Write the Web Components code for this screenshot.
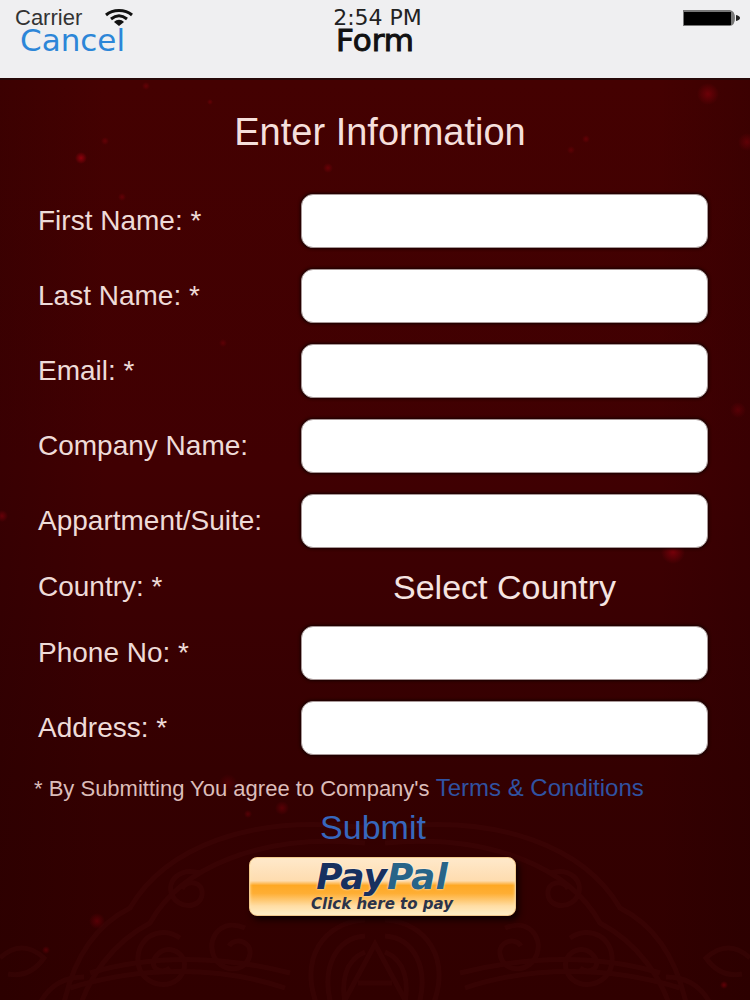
<!DOCTYPE html>
<html lang="en">
<head>
<meta charset="utf-8">
<meta name="viewport" content="width=device-width, initial-scale=1">
<title>Form</title>
<style>
  body {
    margin: 0;
    font-family: "Liberation Sans", Arial, sans-serif;
    background: #330000;
  }
</style>
</head>
<body>
<form-screen></form-screen>

<script>
class StatusBar extends HTMLElement {
    constructor() {
        super();
        this.attachShadow({ mode: 'open' });
    }

    connectedCallback() {
        this.shadowRoot.innerHTML = `
      <style>
        :host {
          display: grid;
          grid-template-columns: 1fr auto 1fr;
          align-items: center;
          height: 24px;
          padding: 6px 10px 0 15px;
          font-size: 22px;
          line-height: 22px;
          color: #333;
        }
        .carrier {
          display: flex;
          align-items: center;
          gap: 22px;
        }
        .time {
          color: #222;
          font-family: "DejaVu Sans", sans-serif;
        }
        .battery {
          justify-self: end;
        }
        svg {
          display: block;
        }
      </style>
      <div class="carrier">
        <span>${this.getAttribute('carrier')}</span>
        <svg width="30" height="18" viewBox="0 0 30 18" aria-hidden="true">
          <path d="M2 6C9 0 21 0 28 6" fill="none" stroke="#111" stroke-width="3"/>
          <path d="M7 10C12 6 18 6 23 10" fill="none" stroke="#111" stroke-width="3"/>
          <path d="M10 13C13 10 17 10 20 13L15 17Z" fill="#111"/>
        </svg>
      </div>
      <span class="time">${this.getAttribute('time')}</span>
      <svg class="battery" width="58" height="18" viewBox="0 0 58 18" aria-hidden="true">
        <path d="M1 1H48Q53 2 53 9Q53 16 48 17H1Z" fill="#777"/>
        <rect x="2" y="3" width="47" height="13" fill="#000"/>
        <path d="M54 6Q58 7 58 9Q58 11 54 12Z" fill="#222"/>
      </svg>
    `;
    }
}
customElements.define('status-bar', StatusBar);

class NavBar extends HTMLElement {
    constructor() {
        super();
        this.attachShadow({ mode: 'open' });
    }

    connectedCallback() {
        this.shadowRoot.innerHTML = `
      <style>
        :host {
          display: grid;
          grid-template-columns: 1fr auto 1fr;
          align-items: start;
          height: 48px;
          padding: 0 20px;
          font-family: "DejaVu Sans", sans-serif;
          font-size: 31px;
          line-height: 20px;
        }
        button {
          justify-self: start;
          padding: 0;
          border: none;
          background: none;
          font: inherit;
          color: #2c86d8;
          cursor: pointer;
        }
        h1 {
          margin: 0;
          font: inherit;
          color: #111;
          -webkit-text-stroke: 1px #111;
        }
      </style>
      <button type="button">Cancel</button>
      <h1><slot></slot></h1>
    `;
    }
}
customElements.define('nav-bar', NavBar);

class FormField extends HTMLElement {
    constructor() {
        super();
        this.attachShadow({ mode: 'open' });
    }

    connectedCallback() {
        const label = this.getAttribute('label');
        const type = this.getAttribute('type') || 'text';
        const star = this.hasAttribute('required') ? ' *' : '';
        const control = type === 'select'
            ? '<select id="control"><option>Select Country</option></select>'
            : `<input id="control" type="${type}">`;
        this.shadowRoot.innerHTML = `
      <style>
        :host {
          display: grid;
          grid-template-columns: 263fr 407fr;
          align-items: center;
        }
        label {
          font-size: 28px;
          line-height: 28px;
          color: #eedbd8;
          white-space: nowrap;
        }
        input, select {
          box-sizing: border-box;
          width: 100%;
          min-width: 0;
          font: inherit;
        }
        input {
          height: 54px;
          padding: 0 12px;
          border: 1px solid #a89898;
          border-radius: 12px;
          background: #fff;
          font-size: 24px;
          box-shadow: 0 0 3px 1px #180000;
        }
        select {
          height: 44px;
          margin: -4px 0;
          padding: 0;
          border: none;
          appearance: none;
          background: none;
          color: #f5e4e1;
          font-size: 34px;
          text-align: center;
          text-align-last: center;
        }
      </style>
      <label for="control">${label}${star}</label>
      ${control}
    `;
    }
}
customElements.define('form-field', FormField);

class PaypalButton extends HTMLElement {
    constructor() {
        super();
        this.attachShadow({ mode: 'open' });
    }

    connectedCallback() {
        this.shadowRoot.innerHTML = `
      <style>
        :host {
          display: block;
        }
        button {
          display: flex;
          flex-direction: column;
          align-items: center;
          box-sizing: border-box;
          width: 267px;
          height: 59px;
          padding: 3px 0 0;
          border: 1px solid #f2c88c;
          border-radius: 8px;
          background: linear-gradient(#ffe9cb 0, #fedcaf 40%, #fea824 48%, #feae34 62%, #ffdda4 84%, #ffefc9 100%);
          box-shadow: inset 0 0 3px #ffe9b8, 3px 4px 6px #100000;
          cursor: pointer;
        }
        .logo {
          font: italic bold 36px/32px "DejaVu Sans", sans-serif;
          color: #17305f;
          text-shadow: 0 0 2px #fff;
        }
        .logo span {
          color: #286488;
        }
        .caption {
          font: italic bold 15px/22px "DejaVu Sans", sans-serif;
          color: #2b3349;
        }
      </style>
      <button type="button">
        <span class="logo">Pay<span>Pal</span></span>
        <span class="caption"><slot></slot></span>
      </button>
    `;
    }
}
customElements.define('paypal-button', PaypalButton);

// Dark red backdrop: glints plus a faint ornament along the bottom
class RedBackdrop extends HTMLElement {
    constructor() {
        super();
        this.attachShadow({ mode: 'open' });
    }

    connectedCallback() {
        const glints = [
            [81, 80, 6, 0.7], [105, 63, 4, 0.3], [146, 8, 4, 0.3], [328, 90, 5, 0.35],
            [708, 16, 11, 0.4], [747, 64, 9, 0.3], [210, 24, 3, 0.3], [586, 61, 4, 0.3],
            [571, 72, 4, 0.25], [122, 119, 4, 0.3], [223, 265, 4, 0.25], [673, 474, 12, 0.5],
            [2, 438, 6, 0.4], [738, 332, 8, 0.25], [282, 730, 7, 0.3], [228, 705, 9, 0.2],
            [97, 843, 8, 0.3], [46, 872, 4, 0.3], [248, 736, 4, 0.3], [724, 907, 4, 0.4],
        ].map(([x, y, r, o]) => `<circle cx="${x}" cy="${y}" r="${r}" fill="url(#glint)" opacity="${o}"/>`).join('');

        const half = `
        <path d="M365 750C250 735 165 770 130 830C90 850 70 890 62 935"/>
        <path d="M365 765C260 755 180 790 150 845C112 865 88 900 78 935"/>
        <path d="M180 860c-20-14-44 0-42 24s34 30 44 12s-12-32-24-20s2 22 12 14"/>
        <path d="M245 850c-22-10-38 8-32 26s30 20 36 4s-14-22-20-12"/>
        <path d="M200 795c-20-6-34 8-28 22s28 14 30 0s-16-16-20-6"/>
        <path d="M90 895c60-18 130-18 200 0M70 910c70-22 150-22 215 0"/>
        <path d="M318 930c-20-50 6-86 47-88M332 930c-12-40 4-70 33-72M346 930c-6-28 0-48 19-56"/>
        <path d="M0 880q22-20 44 0q-14 20-36 16M40 925q14-26 44-26"/>
      `;

        this.shadowRoot.innerHTML = `
      <style>
        :host {
          display: block;
          background: linear-gradient(90deg, #1c000033, transparent 14%, transparent 88%, #1c000033),
            linear-gradient(#440101, #400002 42%, #3a0002 58%, #340001 75%, #300000);
        }
        svg {
          display: block;
          width: 100%;
          height: 100%;
        }
      </style>
      <svg viewBox="0 0 750 922" preserveAspectRatio="xMidYMax slice" aria-hidden="true">
        <defs>
          <radialGradient id="glint">
            <stop offset="0" stop-color="#b00010"/>
            <stop offset="1" stop-color="#b00010" stop-opacity="0"/>
          </radialGradient>
        </defs>
        <g fill="none" stroke="#5a1515" stroke-width="5" opacity="0.16">
          <g>${half}</g>
          <g transform="matrix(-1 0 0 1 750 0)">${half}</g>
          <path d="M345 922L375 866L405 922M358 905H392"/>
        </g>
        ${glints}
      </svg>
    `;
    }
}
customElements.define('red-backdrop', RedBackdrop);

class FormScreen extends HTMLElement {
    constructor() {
        super();
        this.attachShadow({ mode: 'open' });
    }

    connectedCallback() {
        this.shadowRoot.innerHTML = `
      <style>
        :host {
          display: flex;
          flex-direction: column;
          min-height: 100vh;
        }
        header {
          background: #efeff1;
        }
        main {
          position: relative;
          flex: 1;
          border-top: 2px solid #260808;
        }
        red-backdrop {
          position: absolute;
          inset: 0;
        }
        form {
          position: relative;
          display: flex;
          flex-direction: column;
          padding: 32px 42px 24px 38px;
        }
        h2 {
          margin: 0 0 42px;
          padding-left: 14px;
          font-size: 38px;
          font-weight: normal;
          line-height: 40px;
          text-align: center;
          color: #f5dfdb;
        }
        .fields {
          display: flex;
          flex-direction: column;
          gap: 21px;
        }
        .terms {
          margin: 21px -4px 0;
          font-size: 22px;
          line-height: 24px;
          color: #dcbdba;
          white-space: nowrap;
        }
        a {
          font-size: 24px;
          color: #3052a2;
          text-decoration: none;
        }
        .actions {
          display: flex;
          flex-direction: column;
          align-items: center;
          gap: 12px;
          margin-top: 8px;
        }
        .submit {
          padding: 0;
          border: none;
          background: none;
          font: inherit;
          font-size: 34px;
          line-height: 36px;
          color: #3767bd;
          cursor: pointer;
        }
        paypal-button {
          padding-left: 18px;
        }
      </style>
      <header>
        <status-bar carrier="Carrier" time="2:54 PM"></status-bar>
        <nav-bar>Form</nav-bar>
      </header>
      <main>
        <red-backdrop></red-backdrop>
        <form>
          <h2>Enter Information</h2>
          <div class="fields">
            <form-field label="First Name:" required></form-field>
            <form-field label="Last Name:" required></form-field>
            <form-field label="Email:" type="email" required></form-field>
            <form-field label="Company Name:"></form-field>
            <form-field label="Appartment/Suite:"></form-field>
            <form-field label="Country:" type="select" required></form-field>
            <form-field label="Phone No:" type="tel" required></form-field>
            <form-field label="Address:" required></form-field>
          </div>
          <p class="terms">* By Submitting You agree to Company's <a href="#terms">Terms &amp; Conditions</a></p>
          <div class="actions">
            <button class="submit" type="submit">Submit</button>
            <paypal-button>Click here to pay</paypal-button>
          </div>
        </form>
      </main>
    `;
    }
}
customElements.define('form-screen', FormScreen);
</script>
</body>
</html>
